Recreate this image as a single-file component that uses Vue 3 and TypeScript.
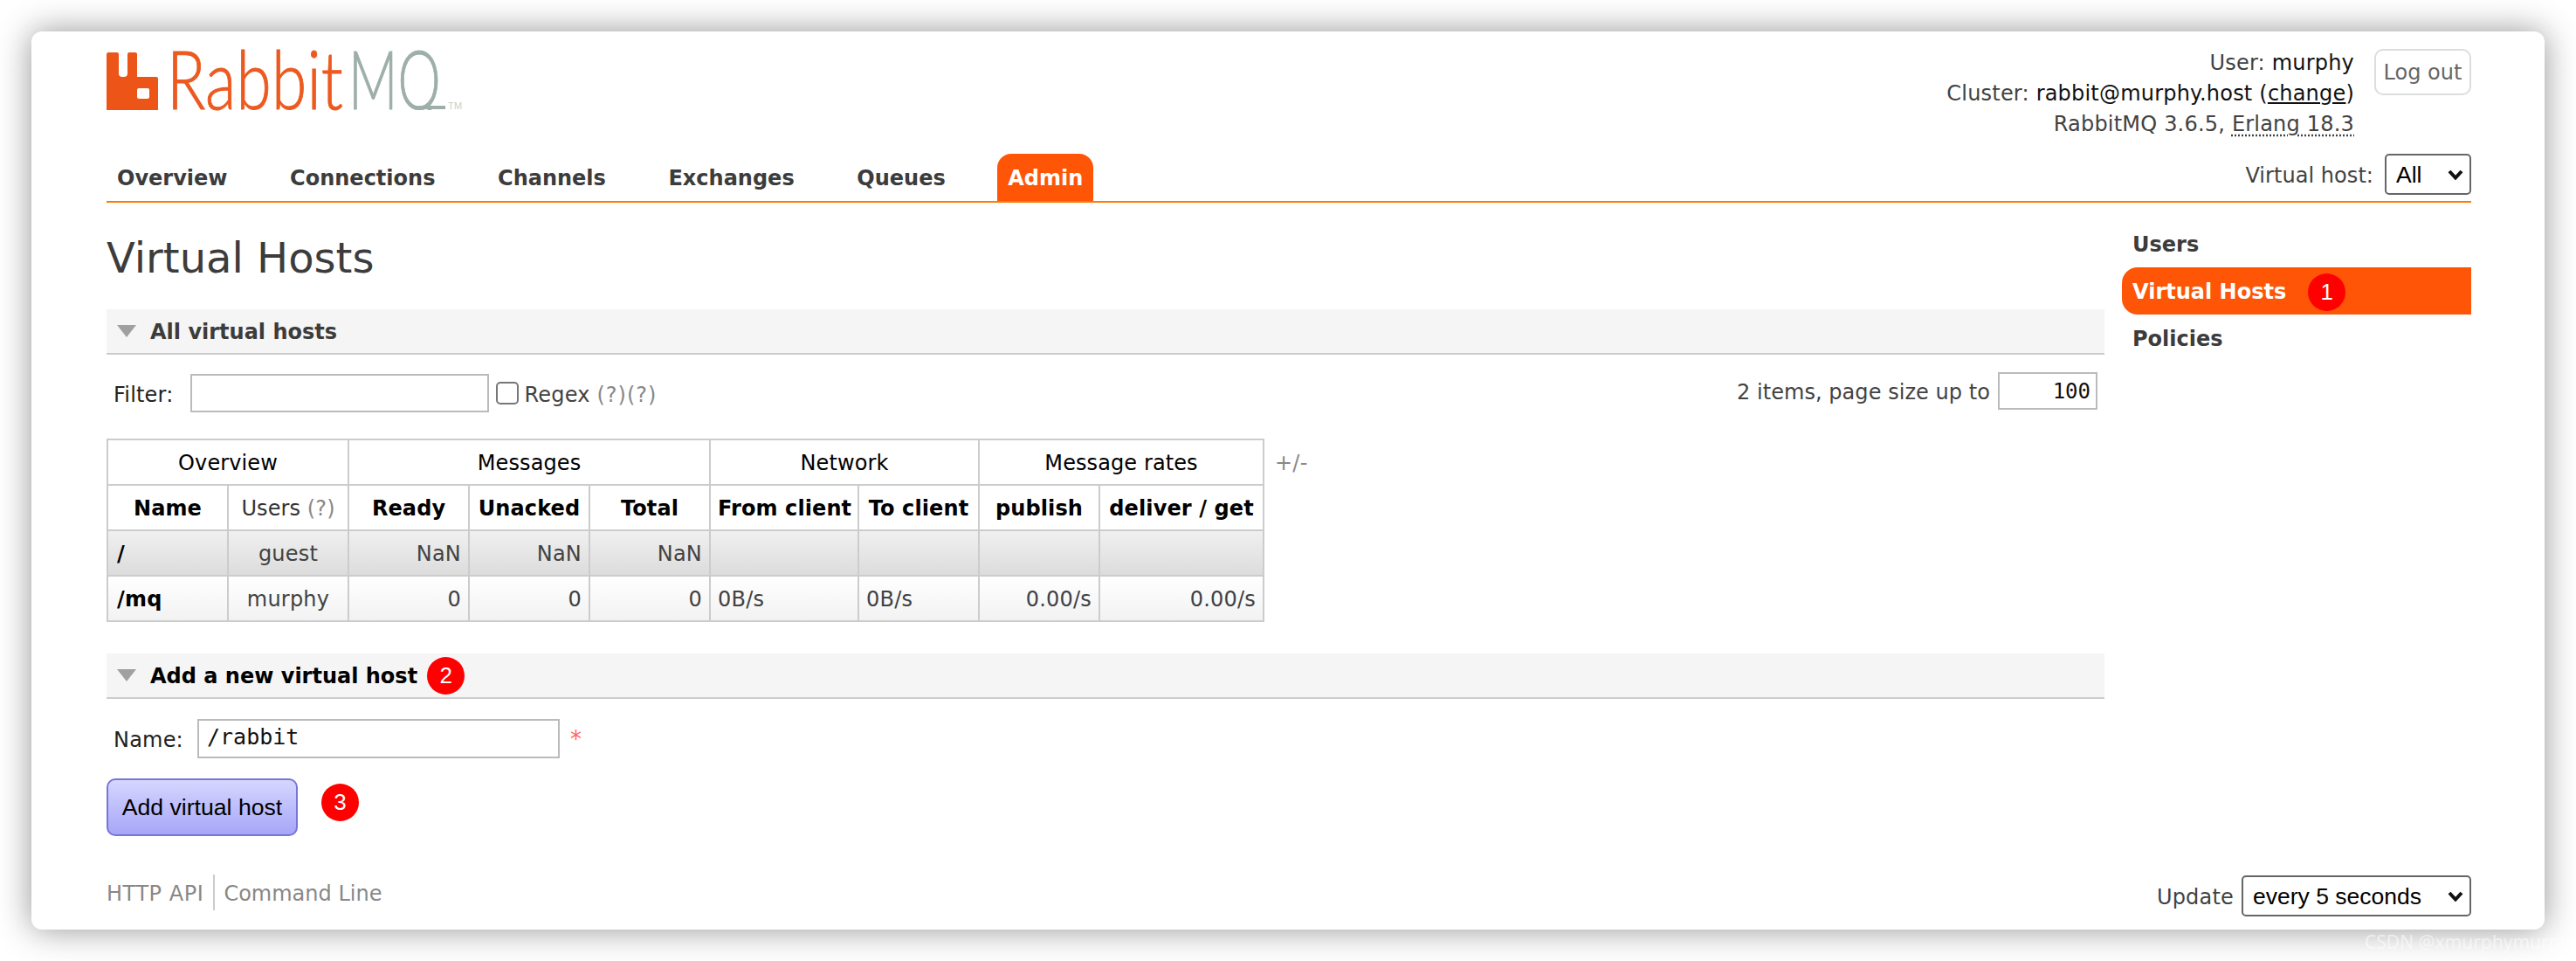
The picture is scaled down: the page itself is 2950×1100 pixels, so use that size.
<script setup lang="ts">
interface Row {
  name: string
  users: string
  ready: string
  unacked: string
  total: string
  from: string
  to: string
  publish: string
  deliver: string
  kind: string
}

const navItems: string[] = ['Overview', 'Connections', 'Channels', 'Exchanges', 'Queues', 'Admin']

const rows: Row[] = [
  { name: '/', users: 'guest', ready: 'NaN', unacked: 'NaN', total: 'NaN', from: '', to: '', publish: '', deliver: '', kind: 'dark' },
  { name: '/mq', users: 'murphy', ready: '0', unacked: '0', total: '0', from: '0B/s', to: '0B/s', publish: '0.00/s', deliver: '0.00/s', kind: 'light' }
]
</script>

<template>
  <div class="page">
    <div class="card">
      <header class="header">
        <svg class="logo" width="406" height="68" viewBox="0 0 406 68">
          <defs>
            <clipPath id="mq-clip"><rect x="270" y="-10" width="130" height="76" /></clipPath>
          </defs>
          <path
            fill="#ec5418"
            fill-rule="evenodd"
            d="M0 2Q0 0 2 0H12Q14 0 14 2V24Q14 28 18 28H20Q24 28 24 24V2Q24 0 26 0H33Q35 0 35 2V28H57Q59 28 59 30V66H0ZM37 41Q35 41 35 43V51Q35 53 37 53H47Q49 53 49 51V43Q49 41 47 41Z"
          />
          <text x="69" y="65" font-family="Lato" font-weight="300" font-size="92" fill="#ec5a20" stroke="#ec5a20" stroke-width="1" textLength="202" lengthAdjust="spacingAndGlyphs">Rabbit</text>
          <text x="277" y="65" font-family="Lato" font-weight="300" font-size="92" fill="#9dafa7" stroke="#9dafa7" stroke-width="1" textLength="106" lengthAdjust="spacingAndGlyphs" clip-path="url(#mq-clip)">MQ</text>
          <rect x="358" y="61" width="30" height="4" fill="#9dafa7" />
          <text x="391" y="65" font-family="Liberation Sans" font-size="11" fill="#c8d0cc">TM</text>
        </svg>
        <div class="account">
          <div class="info">
            <div>User: <b class="strong">murphy</b></div>
            <div>Cluster: <b class="strong">rabbit@murphy.host</b> <span class="strong">(<u>change</u>)</span></div>
            <div>RabbitMQ 3.6.5, <span class="dotted">Erlang 18.3</span></div>
          </div>
          <button class="logout" type="button">Log out</button>
        </div>
      </header>

      <nav class="nav">
        <div class="tabs">
          <a v-for="item in navItems" :key="item" class="tab" :class="{ active: item === 'Admin' }">{{ item }}</a>
        </div>
        <div class="vhost">
          <span class="vhost-label">Virtual host:</span>
          <div class="select-wrap vhost-select">
            <select><option>All</option></select>
            <svg class="chevron" width="18" height="12" viewBox="0 0 18 12"><path d="M2 2L9 9.5L16 2" fill="none" stroke="#111" stroke-width="4" /></svg>
          </div>
        </div>
      </nav>

      <div class="body">
        <main class="main">
          <h1 class="title">Virtual Hosts</h1>

          <section class="section-head">
            <svg class="tri" width="22" height="14" viewBox="0 0 22 14"><path d="M0 0H22L11 14Z" fill="#a0a0a0" /></svg>
            <h2 class="section-title muted">All virtual hosts</h2>
          </section>

          <div class="filter-row">
            <div class="filter-left">
              <span class="dark-label">Filter:</span>
              <input class="text-input filter-input" type="text" />
              <input class="check" type="checkbox" />
              <span class="nudge">Regex <span class="help help-wide">(?)(?)</span></span>
            </div>
            <div class="filter-right">
              <span class="nudge page-label">2 items, page size up to</span>
              <input class="text-input page-input" type="text" value="100" />
            </div>
          </div>

          <div class="table-wrap">
            <table class="list">
              <colgroup>
                <col class="c-a" /><col class="c-a2" /><col class="c-a2" /><col class="c-a2" /><col class="c-a2" />
                <col class="c-b" /><col class="c-a2" /><col class="c-a2" /><col class="c-c" />
              </colgroup>
              <thead>
                <tr class="group-row">
                  <th colspan="2">Overview</th>
                  <th colspan="3">Messages</th>
                  <th colspan="2">Network</th>
                  <th colspan="2">Message rates</th>
                </tr>
                <tr class="head-row">
                  <th>Name</th>
                  <th class="normal">Users <span class="help">(?)</span></th>
                  <th>Ready</th>
                  <th>Unacked</th>
                  <th>Total</th>
                  <th>From client</th>
                  <th>To client</th>
                  <th>publish</th>
                  <th>deliver / get</th>
                </tr>
              </thead>
              <tbody>
                <tr v-for="row in rows" :key="row.name" :class="row.kind">
                  <td class="name">{{ row.name }}</td>
                  <td class="center">{{ row.users }}</td>
                  <td class="num">{{ row.ready }}</td>
                  <td class="num">{{ row.unacked }}</td>
                  <td class="num">{{ row.total }}</td>
                  <td>{{ row.from }}</td>
                  <td>{{ row.to }}</td>
                  <td class="num">{{ row.publish }}</td>
                  <td class="num">{{ row.deliver }}</td>
                </tr>
              </tbody>
            </table>
            <span class="plus">+/-</span>
          </div>

          <section class="section-head second">
            <svg class="tri" width="22" height="14" viewBox="0 0 22 14"><path d="M0 0H22L11 14Z" fill="#a0a0a0" /></svg>
            <h2 class="section-title">Add a new virtual host</h2>
            <span class="badge badge-2">2</span>
          </section>

          <div class="name-row">
            <span class="dark-label name-label">Name:</span>
            <input class="text-input name-input" type="text" value="/rabbit" />
            <span class="star">*</span>
          </div>

          <div class="submit-row">
            <button class="add" type="button">Add virtual host</button>
            <span class="badge badge-3">3</span>
          </div>
        </main>

        <aside class="side">
          <a class="side-item">Users</a>
          <a class="side-item selected">Virtual Hosts <span class="badge badge-1">1</span></a>
          <a class="side-item">Policies</a>
        </aside>
      </div>

      <footer class="footer">
        <div class="links">
          <a class="link link-api">HTTP API</a>
          <a class="link link-sep">Command Line</a>
        </div>
        <div class="update">
          <span class="update-label">Update</span>
          <div class="select-wrap update-select">
            <select><option>every 5 seconds</option></select>
            <svg class="chevron" width="18" height="12" viewBox="0 0 18 12"><path d="M2 2L9 9.5L16 2" fill="none" stroke="#111" stroke-width="4" /></svg>
          </div>
        </div>
      </footer>
    </div>
    <span class="watermark">CSDN @xmurphymurphy</span>
  </div>
</template>

<style>
html,
body {
  margin: 0;
  background: #fff;
}
</style>

<style scoped>
.page {
  position: relative;
  width: 2950px;
  height: 1100px;
  padding: 36px 36px 36px 36px;
  box-sizing: border-box;
  overflow: hidden;
  font-family: "DejaVu Sans", Verdana, sans-serif;
  font-size: 24px;
  letter-spacing: 0.2px;
  color: #424242;
}
.card {
  width: 2878px;
  height: 1028px;
  box-sizing: border-box;
  padding: 0 84px 15px 86px;
  background: #fff;
  border-radius: 12px;
  box-shadow: 0 0 38px rgba(0, 0, 0, 0.42);
  display: flex;
  flex-direction: column;
}
.header {
  height: 140px;
  box-sizing: border-box;
  padding-top: 18px;
  display: flex;
  justify-content: space-between;
  align-items: flex-start;
}
.logo {
  margin-top: 6px;
  display: block;
  overflow: visible;
}
.account {
  display: flex;
  gap: 23px;
  align-items: flex-start;
}
.info {
  padding-top: 1px;
  text-align: right;
  line-height: 35px;
}
.strong {
  font-weight: normal;
  color: #111;
}
.dotted {
  text-decoration: underline dotted;
  text-underline-offset: 4px;
}
.logout {
  margin-top: 2px;
  width: 111px;
  height: 53px;
  padding: 0;
  background: #fff;
  border: 2px solid #ddd;
  border-radius: 10px;
  font: 24px "DejaVu Sans", sans-serif;
  color: #666;
}
.nav {
  height: 56px;
  box-sizing: border-box;
  border-bottom: 2px solid #ff7a00;
  display: flex;
  justify-content: space-between;
}
.tabs {
  display: flex;
  gap: 47.6px;
}
.tab {
  height: 54px;
  line-height: 56px;
  padding: 0 12px;
  font-weight: bold;
  letter-spacing: 0;
  color: #3c3c3c;
}
.tab.active {
  background: #ff5506;
  color: #fff;
  border-radius: 16px 16px 0 0;
}
.vhost {
  display: flex;
  gap: 13px;
  align-items: flex-start;
}
.vhost-label {
  line-height: 50px;
  letter-spacing: 0.05px;
}
.select-wrap {
  position: relative;
}
.select-wrap select {
  appearance: none;
  display: block;
  width: 100%;
  height: 100%;
  box-sizing: border-box;
  margin: 0;
  padding: 0 0 0 11px;
  background: #fff;
  border: 2px solid #666;
  border-radius: 5px;
  font: 26.5px "Liberation Sans", Arial, sans-serif;
  letter-spacing: 0;
  color: #000;
}
.chevron {
  position: absolute;
  right: 9px;
  top: 50%;
  margin-top: -6px;
}
.vhost-select {
  width: 99px;
  height: 47px;
}
.body {
  flex: 1;
  display: flex;
  gap: 20px;
  min-height: 0;
}
.main {
  width: 2288px;
}
.title {
  margin: 35px 0 31px;
  font-size: 48px;
  font-weight: normal;
  letter-spacing: 0;
  line-height: 56px;
  color: #3c3c3c;
}
.section-head {
  height: 52px;
  box-sizing: border-box;
  background: #f5f5f5;
  border-bottom: 2px solid #ccc;
  display: flex;
  align-items: center;
  padding-left: 12px;
}
.tri {
  margin-right: 16px;
}
.section-title {
  margin: 0;
  padding-top: 1px;
  font-size: 24px;
  font-weight: bold;
  letter-spacing: 0;
  color: #000;
}
.section-title.muted {
  color: #3c3c3c;
}
.filter-row {
  margin-top: 20px;
  padding: 0 8px;
  display: flex;
  justify-content: space-between;
  align-items: flex-start;
}
.filter-left {
  margin-top: 2px;
  height: 44px;
  display: flex;
  align-items: center;
}
.dark-label {
  padding-top: 3px;
  color: #222;
}
.nudge {
  padding-top: 3px;
}
.page-label {
  letter-spacing: 0.05px;
}
.text-input {
  box-sizing: border-box;
  margin: 0;
  border: 2px solid #bbb;
  background: #fff;
  outline: none;
  font-family: "DejaVu Sans Mono", monospace;
  letter-spacing: 0;
  color: #111;
}
.filter-input {
  width: 342px;
  height: 44px;
  margin-left: 19px;
}
.check {
  appearance: none;
  width: 26px;
  height: 26px;
  margin: 0 7px 0 8px;
  box-sizing: border-box;
  border: 2px solid #777;
  border-radius: 5px;
  background: #fff;
}
.help {
  color: #888;
}
.help-wide {
  letter-spacing: 1px;
}
.filter-right {
  height: 43px;
  display: flex;
  align-items: center;
  gap: 9px;
}
.page-input {
  width: 114px;
  height: 43px;
  text-align: right;
  padding: 0 6px;
  font-size: 24px;
}
.table-wrap {
  margin-top: 30px;
  display: flex;
  align-items: flex-start;
  gap: 12px;
}
.list {
  width: 1326px;
  table-layout: fixed;
  border-collapse: collapse;
  border: 2px solid #ccc;
}
.c-a {
  width: 138px;
}
.c-a2 {
  width: 138px;
}
.c-b {
  width: 170px;
}
.c-c {
  width: 188px;
}
.list th,
.list td {
  height: 52px;
  box-sizing: border-box;
  padding: 2px 8px 0;
  border: 2px solid #ccc;
  white-space: nowrap;
}
.list th {
  text-align: center;
  color: #000;
  background: #fff;
  letter-spacing: 0.1px;
}
.group-row th,
.list th.normal {
  font-weight: normal;
}
.list th.normal {
  color: #333;
}
.dark td {
  background: linear-gradient(#f0f0f0, #dcdcdc);
}
.light td {
  background: linear-gradient(#fff, #f2f2f2);
}
.list td.name {
  font-weight: bold;
  color: #000;
  padding-left: 10px;
}
.center {
  text-align: center;
}
.num {
  text-align: right;
}
.plus {
  margin-top: 14px;
  color: #888;
  line-height: 28px;
}
.second {
  margin-top: 36px;
}
.name-row {
  margin-top: 23px;
  padding-left: 8px;
  height: 45px;
  display: flex;
  align-items: center;
}
.name-label {
  width: 96px;
}
.name-input {
  width: 415px;
  height: 45px;
  padding: 0 0 4px 9px;
  font-size: 25px;
}
.star {
  margin: 0 0 0 12px;
  font-size: 26px;
  color: #f66;
}
.submit-row {
  margin-top: 23px;
  display: flex;
  align-items: flex-start;
  gap: 27px;
}
.add {
  width: 219px;
  height: 66px;
  padding: 0;
  border: 2px solid #7676d8;
  border-radius: 10px;
  background: linear-gradient(#d6d6ff, #a6a6f8);
  font: 26.6px "Liberation Sans", Arial, sans-serif;
  letter-spacing: 0;
  color: #000;
}
.badge {
  flex: none;
  width: 43px;
  height: 43px;
  border-radius: 50%;
  background: #f00;
  color: #fff;
  font: 26px/43px "Liberation Sans", Arial, sans-serif;
  letter-spacing: 0;
  text-align: center;
}
.badge-1 {
  margin-left: 25px;
}
.badge-2 {
  margin-left: 11px;
}
.badge-3 {
  margin-top: 6px;
}
.side {
  width: 400px;
  padding-top: 20px;
  display: flex;
  flex-direction: column;
}
.side-item {
  height: 54px;
  box-sizing: border-box;
  padding: 2px 0 0 12px;
  font-weight: bold;
  letter-spacing: 0;
  color: #3c3c3c;
  display: flex;
  align-items: center;
}
.side-item.selected {
  background: #ff5506;
  color: #fff;
  border-radius: 18px 0 0 18px;
}
.footer {
  height: 47px;
  display: flex;
  justify-content: space-between;
  align-items: center;
}
.links {
  display: flex;
  height: 38px;
  margin-top: -9px;
  align-items: center;
  color: #888;
}
.link-api {
  letter-spacing: 0.55px;
  padding-top: 3px;
}
.link-sep {
  margin-left: 11px;
  padding: 3px 0 0 10px;
  line-height: 38px;
  letter-spacing: 0;
  border-left: 2px solid #ccc;
}
.update {
  display: flex;
  align-items: center;
  gap: 9px;
}
.update-label {
  margin-top: 3px;
}
.update-select {
  width: 263px;
  height: 47px;
}
.watermark {
  position: absolute;
  left: 2708px;
  top: 1064px;
  line-height: 28px;
  font-family: "Noto Sans", sans-serif;
  font-size: 21px;
  letter-spacing: 0;
  color: rgba(255, 255, 255, 0.55);
  white-space: nowrap;
}
</style>
